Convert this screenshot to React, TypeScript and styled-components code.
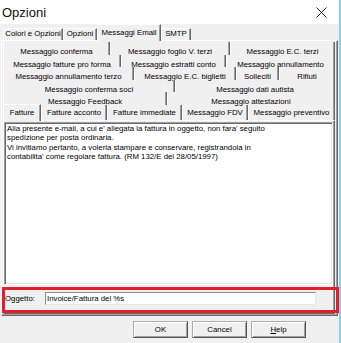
import styled, { createGlobalStyle } from "styled-components";

const GlobalStyle = createGlobalStyle`
  * { box-sizing: border-box; }
  html, body { margin: 0; padding: 0; background: #f0f0f0; }
  body {
    font-family: "Liberation Sans", Arial, sans-serif;
    font-size: 7.8px;
    color: #000;
  }
`;

type TabDef = { label: string; w: number; active?: boolean };
type RowDef = { h: number; pt: number; tabs: TabDef[] };

const outerTabs: TabDef[] = [
  { label: "Colori e Opzioni", w: 60 },
  { label: "Opzioni", w: 34 },
  { label: "Messaggi Email", w: 64, active: true },
  { label: "SMTP", w: 30 },
];

const innerRows: RowDef[] = [
  {
    h: 13,
    pt: 6,
    tabs: [
      { label: "Messaggio conferma", w: 107 },
      { label: "Messaggio foglio V. terzi", w: 120 },
      { label: "Messaggio E.C. terzi", w: 105 },
    ],
  },
  {
    h: 12,
    pt: 6,
    tabs: [
      { label: "Messaggio fatture pro forma", w: 118 },
      { label: "Messaggio estratti conto", w: 105 },
      { label: "Messaggio annullamento", w: 109 },
    ],
  },
  {
    h: 13,
    pt: 6,
    tabs: [
      { label: "Messaggio annullamento terzo", w: 131 },
      { label: "Messaggio E.C. biglietti", w: 102 },
      { label: "Solleciti", w: 43 },
      { label: "Rifiuti", w: 56 },
    ],
  },
  {
    h: 12,
    pt: 6,
    tabs: [
      { label: "Messaggio conferma soci", w: 172 },
      { label: "Messaggio dati autista", w: 160 },
    ],
  },
  {
    h: 13,
    pt: 6,
    tabs: [
      { label: "Messaggio Feedback", w: 164 },
      { label: "Messaggio attestazioni", w: 168 },
    ],
  },
  {
    h: 15,
    pt: 4,
    tabs: [
      { label: "Fatture", w: 38, active: true },
      { label: "Fatture acconto", w: 66 },
      { label: "Fatture immediate", w: 75 },
      { label: "Messaggio FDV", w: 66 },
      { label: "Messaggio preventivo", w: 87 },
    ],
  },
];

const bodyText = `Alla presente e-mail, a cui e' allegata la fattura in oggetto, non fara' seguito
spedizione per posta ordinaria.
Vi invitiamo pertanto, a volerla stampare e conservare, registrandola in
contabilita' come regolare fattura. (RM 132/E del 28/05/1997)`;

const App = () => {
  return (
    <Window>
      <GlobalStyle />
      <TitleBar>
        <Title>Opzioni</Title>
        <svg width="11" height="11" viewBox="0 0 11 11">
          <path d="M0.5 0.5 L10.5 10.5 M10.5 0.5 L0.5 10.5" stroke="#222" strokeWidth="1" />
        </svg>
      </TitleBar>

      <OuterStrip>
        {outerTabs.map((t) => (
          <OuterTab key={t.label} $w={t.w} $active={t.active}>
            {t.label}
          </OuterTab>
        ))}
      </OuterStrip>

      <OuterPanel>
        <InnerStrip>
          {innerRows.map((row, i) => (
            <TabRow key={i} $h={row.h}>
              {row.tabs.map((t) => (
                <InnerTab key={t.label} $w={t.w} $pt={row.pt} $active={t.active}>
                  {t.label}
                </InnerTab>
              ))}
            </TabRow>
          ))}
        </InnerStrip>

        <InnerPanel>
          <MessageBox>{bodyText}</MessageBox>
          <SubjectRow>
            <SubjectLabel>Oggetto:</SubjectLabel>
            <SubjectInput readOnly value="Invoice/Fattura del %s" />
          </SubjectRow>
        </InnerPanel>
      </OuterPanel>

      <ButtonRow>
        <DlgButton>OK</DlgButton>
        <DlgButton>Cancel</DlgButton>
        <DlgButton>
          <u>H</u>elp
        </DlgButton>
      </ButtonRow>

      <Highlight />
    </Window>
  );
};

export default App;

const Window = styled.div`
  position: relative;
  width: 341px;
  height: 343px;
  display: flex;
  flex-direction: column;
  background: #f0f0f0;
  border-right: 2px solid #8ccfe6;
  overflow: hidden;
`;

const TitleBar = styled.div`
  height: 24px;
  flex: 0 0 24px;
  display: flex;
  align-items: center;
  justify-content: space-between;
  padding: 1px 12px 0 2px;
  background: #fff;
`;

const Title = styled.span`
  font-family: "Liberation Sans", Arial, sans-serif;
  font-size: 13px;
  color: #111;
`;

const OuterStrip = styled.div`
  height: 16px;
  flex: 0 0 16px;
  display: flex;
  align-items: flex-end;
  padding-left: 3px;
`;

const OuterTab = styled.div<{ $w: number; $active?: boolean }>`
  flex: 0 0 ${(p) => p.$w}px;
  height: ${(p) => (p.$active ? 17 : 12)}px;
  margin-bottom: ${(p) => (p.$active ? -1 : 0)}px;
  padding-top: ${(p) => (p.$active ? 3 : 0)}px;
  line-height: 9px;
  text-align: center;
  white-space: nowrap;
  background: #f0f0f0;
  border-top: 1px solid #fff;
  border-left: 1px solid #fff;
  border-right: 1px solid #696969;
  box-shadow: inset -1px 0 #a0a0a0;
  ${(p) => p.$active && `position: relative; z-index: 1;`}
`;

const OuterPanel = styled.div`
  width: 337px;
  height: 276px;
  margin-left: 1px;
  display: flex;
  flex-direction: column;
  padding: 1px 2px 1px 1px;
  border: 1px solid;
  border-color: #fff #696969 #696969 #fff;
  box-shadow: inset -1px -1px #a0a0a0;
`;

const InnerStrip = styled.div`
  display: flex;
  flex-direction: column;
  background: #f0f0f0;
`;

const TabRow = styled.div<{ $h: number }>`
  display: flex;
  height: ${(p) => p.$h}px;
`;

const InnerTab = styled.div<{ $w: number; $pt: number; $active?: boolean }>`
  flex: 0 0 ${(p) => p.$w}px;
  padding-top: ${(p) => p.$pt}px;
  line-height: 7px;
  text-align: center;
  white-space: nowrap;
  border-left: 1px solid #fff;
  border-right: 1px solid #696969;
  box-shadow: inset -1px 0 #a0a0a0;
  ${(p) =>
    p.$active &&
    `
    align-self: flex-start;
    height: 17px;
    margin-top: -1px;
    padding-top: ${p.$pt}px;
    background: #f0f0f0;
    border-top: 1px solid #fff;
    position: relative;
    z-index: 1;
  `}
`;

const InnerPanel = styled.div`
  flex: 1;
  display: flex;
  flex-direction: column;
  padding: 1px 1px 0 0;
  border: 1px solid;
  border-color: #fff #696969 #696969 #fff;
  box-shadow: inset -1px -1px #a0a0a0;
`;

const MessageBox = styled.div`
  width: 329px;
  height: 163px;
  padding: 1px 2px;
  background: #fff;
  white-space: pre-line;
  line-height: 9.3px;
  border: 1px solid;
  border-color: #a0a0a0 #fff #fff #a0a0a0;
  box-shadow: inset 1px 1px #696969, inset -1px -1px #e3e3e3;
`;

const SubjectRow = styled.div`
  flex: 1;
  display: flex;
  align-items: center;
  padding: 0 0 2px 1px;
`;

const SubjectLabel = styled.span`
  width: 40px;
`;

const SubjectInput = styled.input`
  width: 271px;
  height: 13px;
  padding: 0 1px;
  margin: 0;
  font-family: "Liberation Sans", Arial, sans-serif;
  font-size: 7.8px;
  color: #000;
  background: #fff;
  border: 1px solid;
  border-color: #8c8c8c #e6e6e6 #e6e6e6 #8c8c8c;
  outline: none;
`;

const ButtonRow = styled.div`
  display: flex;
  gap: 4px;
  padding: 5px 0 0 133px;
`;

const DlgButton = styled.button`
  width: 55px;
  height: 17px;
  padding: 0;
  font-family: "Liberation Sans", Arial, sans-serif;
  font-size: 7.8px;
  color: #000;
  background: #f0f0f0;
  border: 1px solid;
  border-color: #adadad #555 #555 #adadad;
  box-shadow: inset 1px 1px #fff, inset -1px -1px #a0a0a0;
  u {
    text-decoration: underline;
  }
`;

const Highlight = styled.div`
  position: absolute;
  left: 2px;
  top: 287px;
  width: 337px;
  height: 26px;
  border: 3px solid #e2202b;
  pointer-events: none;
`;
